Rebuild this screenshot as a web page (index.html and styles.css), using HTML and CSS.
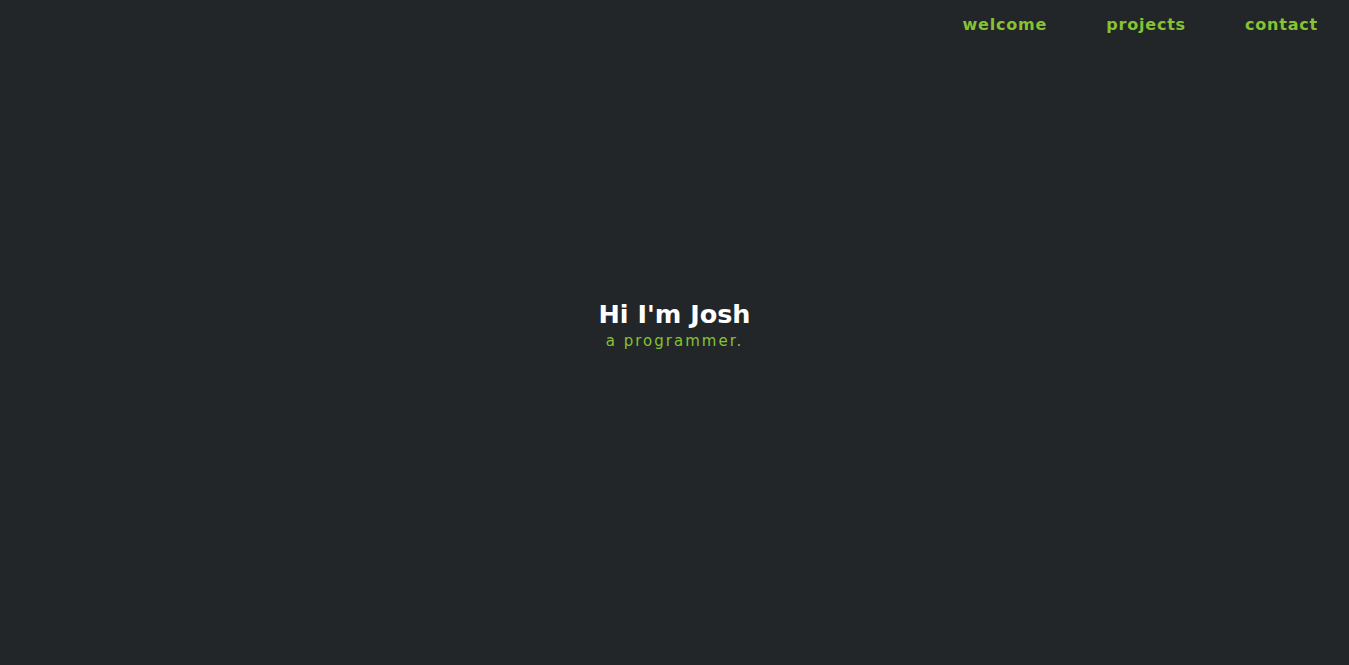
FILE: index.html
```html
<!DOCTYPE html>
<html lang="en">
<head>
<meta charset="utf-8">
<title>Josh</title>
<link rel="stylesheet" href="styles.css">
</head>
<body>
<header class="site-nav">
  <a class="nav-link" href="#welcome">welcome</a>
  <a class="nav-link" href="#projects">projects</a>
  <a class="nav-link" href="#contact">contact</a>
</header>
<main class="hero" id="welcome">
  <h1 class="hero-title">Hi I'm Josh</h1>
  <p class="hero-sub">a programmer.</p>
</main>
</body>
</html>
```
FILE: styles.css
```css
html, body {
  margin: 0;
  padding: 0;
  background: #222629;
  height: 100%;
}
body {
  font-family: "DejaVu Sans", "Liberation Sans", sans-serif;
  position: relative;
}
.site-nav {
  position: absolute;
  top: 0;
  left: 0;
  right: 0;
  display: flex;
  justify-content: flex-end;
  gap: 59px;
  padding: 14px 31px 0 0;
}
.nav-link {
  color: #86c232;
  text-decoration: none;
  font-weight: bold;
  font-size: 16px;
  line-height: 22px;
  letter-spacing: 0.8px;
}
.hero {
  height: 100%;
  display: flex;
  flex-direction: column;
  align-items: center;
  justify-content: center;
  padding-bottom: 17px;
  box-sizing: border-box;
}
.hero-title {
  margin: 0;
  color: #ffffff;
  font-size: 25.5px;
  line-height: 30px;
  font-weight: bold;
}
.hero-sub {
  margin: 3px 0 0;
  color: #86c232;
  font-size: 15px;
  line-height: 18px;
  letter-spacing: 2px;
}
```
